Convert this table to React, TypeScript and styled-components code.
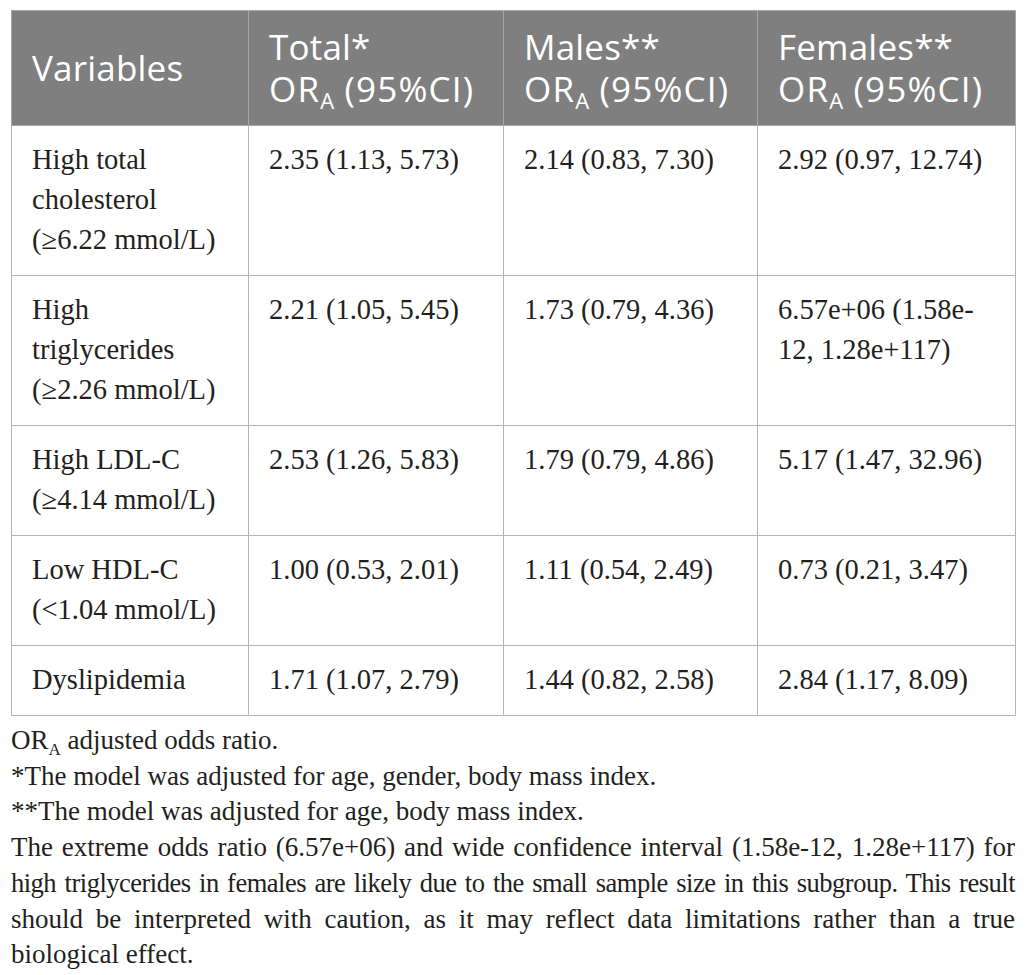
import React from 'react';
import styled, { createGlobalStyle } from 'styled-components';

const GlobalStyle = createGlobalStyle`
  html, body {
    margin: 0;
    padding: 0;
    background: #ffffff;
  }
`;

type Row = {
  label: React.ReactNode;
  total: React.ReactNode;
  males: React.ReactNode;
  females: React.ReactNode;
};

const rows: Row[] = [
  {
    label: (
      <>
        High total
        <br />
        cholesterol
        <br />
        (≥6.22 mmol/L)
      </>
    ),
    total: '2.35 (1.13, 5.73)',
    males: '2.14 (0.83, 7.30)',
    females: '2.92 (0.97, 12.74)',
  },
  {
    label: (
      <>
        High
        <br />
        triglycerides
        <br />
        (≥2.26 mmol/L)
      </>
    ),
    total: '2.21 (1.05, 5.45)',
    males: '1.73 (0.79, 4.36)',
    females: (
      <>
        6.57e+06 (1.58e-
        <br />
        12, 1.28e+117)
      </>
    ),
  },
  {
    label: (
      <>
        High LDL-C
        <br />
        (≥4.14 mmol/L)
      </>
    ),
    total: '2.53 (1.26, 5.83)',
    males: '1.79 (0.79, 4.86)',
    females: '5.17 (1.47, 32.96)',
  },
  {
    label: (
      <>
        Low HDL-C
        <br />
        (&lt;1.04 mmol/L)
      </>
    ),
    total: '1.00 (0.53, 2.01)',
    males: '1.11 (0.54, 2.49)',
    females: '0.73 (0.21, 3.47)',
  },
  {
    label: 'Dyslipidemia',
    total: '1.71 (1.07, 2.79)',
    males: '1.44 (0.82, 2.58)',
    females: '2.84 (1.17, 8.09)',
  },
];

const headers = ['Total*', 'Males**', 'Females**'];

// the caveat paragraph, broken where the printed note breaks
const caveat = [
  { text: 'The extreme odds ratio (6.57e+06) and wide confidence interval (1.58e-12, 1.28e+117) for' },
  {
    text: 'high triglycerides in females are likely due to the small sample size in this subgroup. This result',
    tight: true,
  },
  { text: 'should be interpreted with caution, as it may reflect data limitations rather than a true' },
  { text: 'biological effect.', last: true },
];

const App: React.FC = () => {
  return (
    <Page>
      <GlobalStyle />
      <Table>
        <colgroup>
          <Col $width={237} />
          <Col $width={255} />
          <Col $width={254} />
          <Col $width={258} />
        </colgroup>
        <thead>
          <tr>
            <HeadCell>Variables</HeadCell>
            {headers.map((h) => (
              <HeadCell key={h}>
                {h}
                <br />
                <OrLine>
                  OR<Sub>A</Sub> (95%CI)
                </OrLine>
              </HeadCell>
            ))}
          </tr>
        </thead>
        <tbody>
          {rows.map((r, i) => (
            <tr key={i}>
              <Cell>{r.label}</Cell>
              <Cell>{r.total}</Cell>
              <Cell>{r.males}</Cell>
              <Cell>{r.females}</Cell>
            </tr>
          ))}
        </tbody>
      </Table>
      <Notes>
        <Note>
          OR<NoteSub>A</NoteSub> adjusted odds ratio.
        </Note>
        <Note>*The model was adjusted for age, gender, body mass index.</Note>
        <Note>**The model was adjusted for age, body mass index.</Note>
        <Note>
          {caveat.map((l, i) => (
            <CaveatLine key={i} $tight={l.tight} $last={l.last}>
              {l.text}
            </CaveatLine>
          ))}
        </Note>
      </Notes>
    </Page>
  );
};

export default App;

const Page = styled.div`
  width: 1004px;
  padding: 10px 11px;
  font-family: 'Liberation Serif', 'Times New Roman', serif;
  color: #231f20;
`;

const Table = styled.table`
  width: 1004px;
  border-collapse: collapse;
  table-layout: fixed;
`;

const Col = styled.col<{ $width: number }>`
  width: ${(p) => p.$width}px;
`;

const HeadCell = styled.th`
  height: 115px;
  box-sizing: border-box;
  padding: 0 20px;
  background: #7f7f7f;
  border: 1px solid #a6a6a6;
  color: #ffffff;
  font-family: 'Open Sans', 'Liberation Sans', sans-serif;
  font-weight: 400;
  font-size: 35px;
  line-height: 42px;
  text-align: left;
  vertical-align: middle;
  letter-spacing: 0.2px;
  white-space: nowrap;
`;

const OrLine = styled.span`
  letter-spacing: 1.2px;
`;

const Sub = styled.sub`
  font-size: 22px;
  line-height: 0;
  vertical-align: -7px;
  letter-spacing: 0;
`;

const Cell = styled.td`
  padding: 14px 20px 15px;
  border: 1px solid #b4b4b4;
  font-size: 28.5px;
  line-height: 40px;
  vertical-align: top;
  text-align: left;
  white-space: nowrap;
`;

const Notes = styled.div`
  padding-top: 7px;
  font-size: 27px;
  line-height: 35.7px;
`;

const Note = styled.p`
  margin: 0;
`;

const CaveatLine = styled.span<{ $tight?: boolean; $last?: boolean }>`
  display: block;
  white-space: nowrap;
  text-align: ${(p) => (p.$last ? 'left' : 'justify')};
  text-align-last: ${(p) => (p.$last ? 'left' : 'justify')};
  font-size: ${(p) => (p.$tight ? '26.5px' : '27px')};
  letter-spacing: ${(p) => (p.$tight ? '-0.5px' : '0')};
`;

const NoteSub = styled.sub`
  font-size: 17px;
  line-height: 0;
  vertical-align: -6px;
`;
